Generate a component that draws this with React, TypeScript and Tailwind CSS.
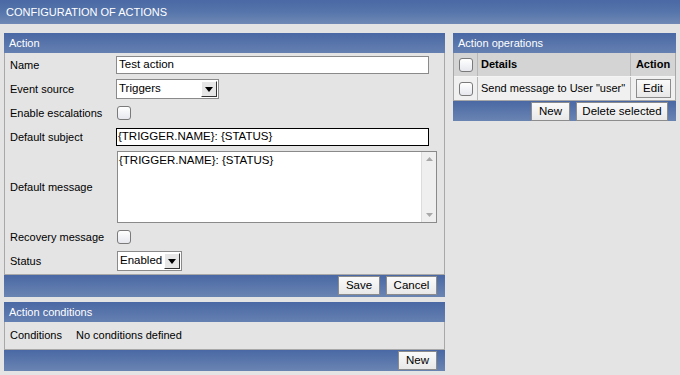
import React from "react";

const font = { fontFamily: '"Liberation Sans", Arial, sans-serif' };

function Checkbox() {
  return (
    <div className="w-[14px] h-[14px] rounded-[3px] border border-[#7a7a7a] bg-gradient-to-b from-[#ffffff] to-[#e6e8ee]" />
  );
}

function Select({ value, width }: { value: string; width: string }) {
  return (
    <div className={`flex h-[20px] items-stretch border border-[#8a8a8a] bg-white ${width}`}>
      <div className="flex-1 flex items-center pl-[2px] text-[11.5px] text-black">{value}</div>
      <div className="w-[16px] my-[1px] mr-[1px] flex items-center justify-center bg-[#e6e6e6] border border-t-white border-l-white border-r-[#333] border-b-[#333]">
        <svg width="8" height="5" viewBox="0 0 8 5"><path d="M0 0h8L4 5z" fill="#000" /></svg>
      </div>
    </div>
  );
}

function Button({ children, w }: { children: React.ReactNode; w: string }) {
  return (
    <div className={`h-[19px] ${w} flex items-center justify-center border border-[#8c8c8c] bg-gradient-to-b from-[#fafafa] to-[#e8e8e8] text-[11.5px] text-black`}>
      {children}
    </div>
  );
}

function PanelHeader({ title }: { title: string }) {
  return (
    <div className="h-[20px] flex items-center pl-[5px] text-[11px] text-white bg-gradient-to-b from-[#4a68a4] to-[#6580b1]">
      {title}
    </div>
  );
}

function FooterBar({ children, h }: { children: React.ReactNode; h: string }) {
  return (
    <div className={`${h} flex items-start pt-[1px] justify-end gap-[6px] pr-[8px] bg-gradient-to-b from-[#4a68a4] to-[#6a84b2]`}>
      {children}
    </div>
  );
}

function Row({ label, children, h = "h-[24px]" }: { label: string; children?: React.ReactNode; h?: string }) {
  return (
    <div className={`flex items-center ${h}`}>
      <div className="w-[111px] pl-[5px] text-[11px] text-black">{label}</div>
      <div className="flex-1 flex items-center">{children}</div>
    </div>
  );
}

export default function App() {
  return (
    <div className="w-[680px] h-[375px] bg-[#e4e4e4] overflow-hidden" style={font}>
      <div className="h-[24px] flex items-center pl-[6px] text-[11px] text-white bg-gradient-to-b from-[#4a69a5] via-[#5675ab] to-[#7089b5]">
        CONFIGURATION OF ACTIONS
      </div>
      <div className="flex gap-[8px] pl-[4px] pt-[9px]">
        {/* Left column */}
        <div className="w-[441px] flex flex-col">
          <PanelHeader title="Action" />
          <div className="border border-[#a8a8a8] border-t-0 bg-[#e4e4e4] pb-[1px]">
            <Row label="Name">
              <div className="w-[313px] h-[18px] border border-[#8a8a8a] bg-white flex items-center pl-[2px] text-[11.5px]">Test action</div>
            </Row>
            <Row label="Event source">
              <Select value="Triggers" width="w-[103px]" />
            </Row>
            <Row label="Enable escalations">
              <div className="pl-[1px]"><Checkbox /></div>
            </Row>
            <Row label="Default subject">
              <div className="w-[313px] h-[18px] border border-black bg-white flex items-center pl-[1px] text-[11.5px]">{"{TRIGGER.NAME}: {STATUS}"}</div>
            </Row>
            <Row label="Default message" h="h-[76px]">
              <div className="ml-[1px] w-[320px] h-[72px] border border-[#8a8a8a] bg-white flex">
                <div className="flex-1 pl-[1px] pt-[1px] text-[11.5px] leading-[14px]">{"{TRIGGER.NAME}: {STATUS}"}</div>
                <div className="w-[15px] bg-[#efefef] border-l border-[#dcdcdc] flex flex-col justify-between items-center py-[5px]">
                  <svg width="7" height="4" viewBox="0 0 7 4"><path d="M0 4h7L3.5 0z" fill="#a8a8a8" /></svg>
                  <svg width="7" height="4" viewBox="0 0 7 4"><path d="M0 0h7L3.5 4z" fill="#a8a8a8" /></svg>
                </div>
              </div>
            </Row>
            <Row label="Recovery message">
              <div className="pl-[1px]"><Checkbox /></div>
            </Row>
            <Row label="Status">
              <div className="pl-[1px]"><Select value="Enabled" width="w-[65px]" /></div>
            </Row>
          </div>
          <FooterBar h="h-[22px]">
            <Button w="w-[42px]">Save</Button>
            <Button w="w-[51px]">Cancel</Button>
          </FooterBar>

          <div className="mt-[5px]">
            <PanelHeader title="Action conditions" />
            <div className="h-[28px] border border-[#a8a8a8] border-t-0 flex items-center text-[11px] text-black">
              <div className="w-[71px] pl-[5px]">Conditions</div>
              <div>No conditions defined</div>
            </div>
            <FooterBar h="h-[21px]">
              <Button w="w-[39px]">New</Button>
            </FooterBar>
          </div>
        </div>

        {/* Right column */}
        <div className="w-[223px] flex flex-col">
          <PanelHeader title="Action operations" />
          <div className="border border-[#a8a8a8] border-t-0 text-[11px] text-black">
            <div className="flex h-[24px] bg-[#d4d4d4] border-b border-[#f4f4f4]">
              <div className="w-[24px] flex items-center justify-center border-r border-[#b8b8b8]"><Checkbox /></div>
              <div className="w-[153px] flex items-center pl-[3px] font-bold border-r border-[#b8b8b8]">Details</div>
              <div className="flex-1 flex items-center justify-center font-bold">Action</div>
            </div>
            <div className="flex h-[23px] bg-[#f0f0f0]">
              <div className="w-[24px] flex items-center justify-center border-r border-[#b8b8b8]"><Checkbox /></div>
              <div className="w-[153px] flex items-center pl-[3px] border-r border-[#b8b8b8]">Send message to User "user"</div>
              <div className="flex-1 flex items-center justify-center">
                <Button w="w-[35px]">Edit</Button>
              </div>
            </div>
          </div>
          <FooterBar h="h-[20px]">
            <Button w="w-[39px]">New</Button>
            <Button w="w-[92px]">Delete selected</Button>
          </FooterBar>
        </div>
      </div>
    </div>
  );
}
